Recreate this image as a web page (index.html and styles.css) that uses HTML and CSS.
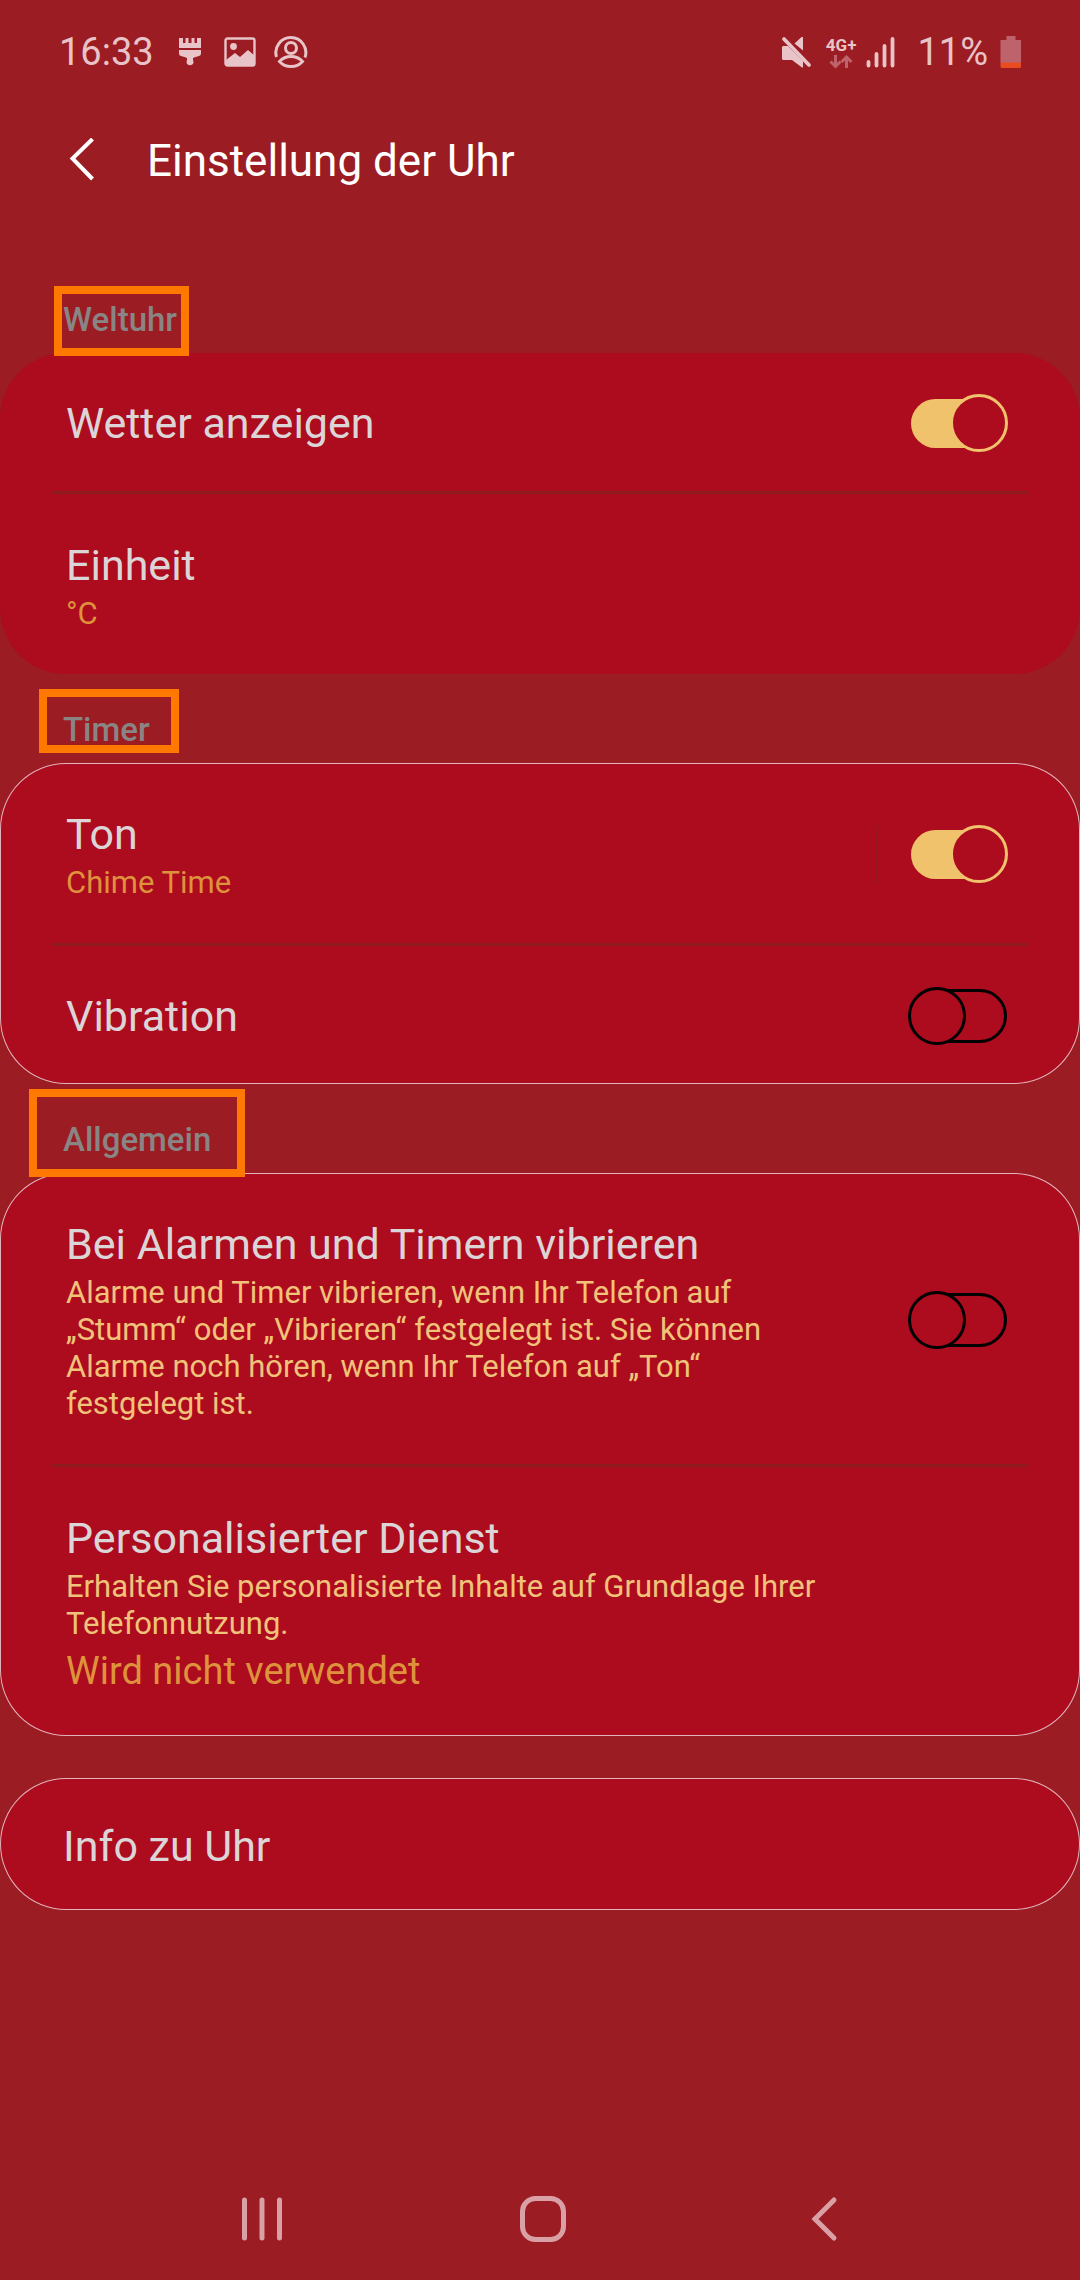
FILE: index.html
```html
<!DOCTYPE html>
<html lang="de">
<head>
<meta charset="utf-8">
<meta name="viewport" content="width=device-width, initial-scale=1">
<title>Einstellung der Uhr</title>
<link rel="stylesheet" href="styles.css">
</head>
<body>
<div class="status-bar">
  <div class="status-left">
    <span class="status-text">16:33</span>
    <svg class="brush" width="24" height="30" viewBox="0 0 24 30" fill="currentColor" aria-hidden="true"><path d="M1 1h4v5h2.500v-5h3v5h3v-5h3v5h2.500v-5H23v10H1z"/><path d="M1 13h22v3.500q0 2-2 2.500l-5 1.500q-1.500.5-1 2l.5 3a3.600 3.600 0 0 1-7 0l.5-3q.5-1.500-1-2L3 19q-2-.5-2-2.500z"/></svg>
    <svg class="photo" width="32" height="30" viewBox="0 0 32 30" aria-hidden="true"><rect x="1.500" y="1.500" width="29" height="27" rx="2" fill="none" stroke="currentColor" stroke-width="2.400"/><circle cx="9.500" cy="9.500" r="3.400" fill="currentColor"/><path d="M2 23l9-7 5 4 8-7 7 6v9.500H2z" fill="currentColor"/></svg>
    <svg width="34" height="34" viewBox="0 0 34 34" fill="none" stroke="currentColor" stroke-width="3" aria-hidden="true"><path d="M2.500 22A15 15 0 1 1 31 22.500"/><circle cx="17" cy="13" r="5.500"/><path d="M5.500 26.500Q10 21.500 17 21.500t11.500 5Q24 31.500 17 31.500T5.500 26.500z"/></svg>
  </div>
  <div class="status-right">
    <svg width="31" height="34" viewBox="0 0 31 34" aria-hidden="true"><path d="M2 11h5L22 26v6.500h-1L11 25H2.500Q1 25 1 23.500V12z" fill="currentColor"/><path d="M13.500 8.500L20.500 2H22v13.500z" fill="currentColor"/><path d="M3 4l25 26" stroke="currentColor" stroke-width="3.800" stroke-linecap="round"/></svg>
    <span class="network"><span class="network-type">4G+</span>
      <svg width="24" height="14" viewBox="0 0 24 14" fill="none" stroke="currentColor" stroke-width="3" aria-hidden="true"><path d="M6.500 0v11M1.500 6.500l5 5 5-5M17.500 13V2M12.500 7l5-5 5 5"/></svg>
    </span>
    <svg class="signal" width="29" height="32" viewBox="0 0 29 32" stroke="currentColor" stroke-width="3.800" stroke-linecap="round" aria-hidden="true"><path d="M2.500 26v3.500M10.500 18v11.500M18.500 10v19.500M26.500 3v26.500"/></svg>
    <span class="status-text">11%</span>
    <svg class="battery" width="22" height="34" viewBox="0 0 22 34" aria-hidden="true"><path d="M6.500 1h9v4H21v23H.500V5h6z" fill="#be636b"/><path d="M.500 27.500H21v4q0 1.500-1.500 1.500H2Q.500 33 .500 31.500z" fill="#e84c20"/></svg>
  </div>
</div>

<header class="app-bar">
  <button class="back" type="button" aria-label="Zurück"><svg width="28" height="44" viewBox="0 0 28 44" fill="none" stroke="currentColor" stroke-width="4"><path d="M24.500 1L4.500 20.500 24.500 41"/></svg></button>
  <h1>Einstellung der Uhr</h1>
</header>

<main>
  <section>
    <h2><span>Weltuhr</span><i class="mark mark-world"></i></h2>
    <div class="card card-plain">
      <label class="row row-single"><span class="title">Wetter anzeigen</span><input class="switch" type="checkbox" role="switch" checked></label>
      <div class="row"><div class="text"><span class="title">Einheit</span><span class="value">°C</span></div></div>
    </div>
  </section>
  <section>
    <h2><span>Timer</span><i class="mark mark-timer"></i></h2>
    <div class="card">
      <div class="row"><div class="text"><label class="title" for="sound">Ton</label><span class="value">Chime Time</span></div><span class="split"></span><input class="switch" id="sound" type="checkbox" role="switch" checked></div>
      <label class="row row-single"><span class="title">Vibration</span><input class="switch" type="checkbox" role="switch"></label>
    </div>
  </section>
  <section>
    <h2><span>Allgemein</span><i class="mark mark-general"></i></h2>
    <div class="card">
      <div class="row"><div class="text"><label class="title" for="vibrate">Bei Alarmen und Timern vibrieren</label><span class="note">Alarme und Timer vibrieren, wenn Ihr Telefon auf „Stumm“ oder „Vibrieren“ festgelegt ist. Sie können Alarme noch hören, wenn Ihr Telefon auf „Ton“ festgelegt ist.</span></div><input class="switch" id="vibrate" type="checkbox" role="switch"></div>
      <div class="row"><div class="text"><span class="title">Personalisierter Dienst</span><span class="note">Erhalten Sie personalisierte Inhalte auf Grundlage Ihrer Telefonnutzung.</span><span class="state">Wird nicht verwendet</span></div></div>
    </div>
  </section>
  <section class="about">
    <div class="card"><div class="row"><span class="title">Info zu Uhr</span></div></div>
  </section>
</main>

<nav class="nav-bar" aria-label="System">
  <button type="button" aria-label="Letzte Apps"><svg width="46" height="48" viewBox="0 0 46 48" stroke="currentColor" stroke-width="5" stroke-linecap="round"><path d="M5.500 5v38M23 5v38M40.500 5v38"/></svg></button>
  <button type="button" aria-label="Startseite"><svg width="48" height="48" viewBox="0 0 48 48" fill="none" stroke="currentColor" stroke-width="5"><rect x="3.500" y="3.500" width="41" height="41" rx="13"/></svg></button>
  <button type="button" aria-label="Zurück"><svg width="28" height="48" viewBox="0 0 28 48" fill="none" stroke="currentColor" stroke-width="5" stroke-linecap="round"><path d="M24 5L5 24l19 19"/></svg></button>
</nav>
</body>
</html>
```
FILE: styles.css
```css
*, *::before, *::after { box-sizing: border-box; }

body {
  margin: 0;
  min-height: 100vh;
  display: flex;
  flex-direction: column;
  background: #9b1c22;
  color: #dcd5d7;
  font-family: Roboto, "Liberation Sans", sans-serif;
}

h1, h2 { margin: 0; }
svg { display: block; flex: none; }

button {
  display: grid;
  place-items: center;
  margin: 0;
  padding: 0;
  border: 0;
  background: none;
  color: inherit;
}

.status-bar {
  display: flex;
  justify-content: space-between;
  height: 104px;
  padding: 0 58px 0 59px;
  color: #e8c3c7;
}
.status-left, .status-right { display: flex; align-items: center; }
.status-text { font-size: 38px; line-height: 48px; }
.brush { margin-left: 24px; }
.photo { margin: 0 18px 0 22px; }
.network {
  display: flex;
  flex-direction: column;
  align-items: center;
  margin: 0 10px 0 14px;
  color: #be636b;
}
.network-type {
  color: #e8c3c7;
  font-size: 17px;
  font-weight: 700;
  line-height: 20px;
}
.signal { margin-right: 22px; }
.battery { margin-left: 12px; }

.app-bar {
  display: flex;
  align-items: center;
  gap: 51px;
  height: 160px;
  padding: 0 68px 48px;
  color: #fff;
}
h1 { padding-top: 2px; font-size: 44px; font-weight: 400; line-height: 56px; }

h2 {
  position: relative;
  padding: 34px 63px 11px;
  color: #8a8585;
  font-size: 33px;
  font-weight: 500;
  line-height: 44px;
}

/* Highlight frames lie over the headings and the card edges. */
.mark {
  position: absolute;
  z-index: 1;
  border: 8px solid #ff7800;
}
.mark-world { left: 54px; top: 22px; width: 135px; height: 70px; }
.mark-timer { left: 39px; top: 15px; width: 140px; height: 64px; }
.mark-general { left: 29px; top: 5px; width: 216px; height: 88px; }

.card {
  border-radius: 66px;
  background: #ad0b1e;
  box-shadow: inset 0 0 0 1px #e0b4ba;
}
.card-plain { box-shadow: none; }

.row {
  display: flex;
  align-items: center;
  justify-content: space-between;
  padding: 44px 72px 42px 66px;
}
.row-single { padding-top: 41px; padding-bottom: 39px; }
.row + .row {
  border-top: 3px solid;
  border-image: linear-gradient(to right, transparent 52px, #8f1a20 52px, #8f1a20 calc(100% - 52px), transparent calc(100% - 52px)) 3 0 0;
}

.text { display: flex; flex: 1; flex-direction: column; margin-right: 66px; }
.title { font-size: 43px; line-height: 54px; }
.value, .note { margin-top: 3px; font-size: 31px; line-height: 37px; }
.value { color: #df923c; }
.note { color: #f0c27a; }
.state { margin-top: 6px; color: #df923c; font-size: 38px; line-height: 46px; }

.split { width: 1px; height: 58px; margin: 0 31px 0 -66px; background: #931820; }

.switch {
  appearance: none;
  display: grid;
  flex: none;
  align-items: center;
  width: 100px;
  height: 58px;
  margin: 0;
}
.switch::before, .switch::after { content: ""; grid-area: 1 / 1; }
.switch::before {
  height: 54px;
  margin: 0 1px 0 3px;
  border: 3px solid #000;
  border-radius: 27px;
}
.switch::after {
  width: 58px;
  height: 58px;
  border: 3px solid #000;
  border-radius: 50%;
  background: #ad0b1e;
}
.switch:checked::before { height: 49px; border: 0; background: #f0c26c; }
.switch:checked::after { justify-self: end; border-color: #f0c26c; }

.about { margin-top: 42px; }
.about .row { padding: 41px 63px 37px; }

.nav-bar {
  display: grid;
  grid-template-columns: repeat(3, 1fr);
  height: 122px;
  margin-top: auto;
  padding: 0 115px 0 121px;
  color: #d9a0a5;
}
```
